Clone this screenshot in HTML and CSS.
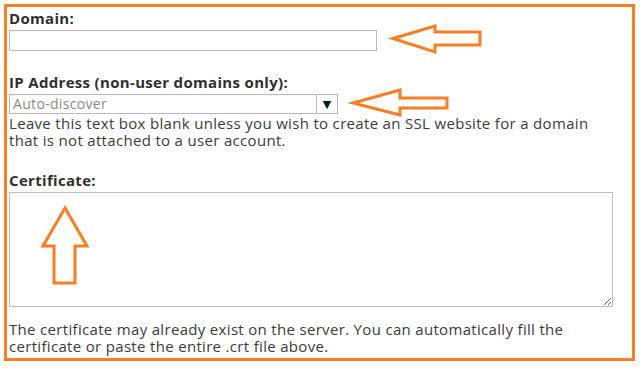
FILE: index.html
```html
<!doctype html>
<html lang="en">
<head>
<title>Install SSL certificate</title>
<meta charset=UTF-8>
<meta name="viewport" content="width=device-width, initial-scale=1.0">
<link rel="stylesheet" href="styles.css">
</head>
<body>
<div class="frame">
<label class="lbl" for="domain">Domain:</label>
<input class="txt" id="domain" type="text">
<label class="lbl gap" for="ip">IP Address (non-user domains only):</label>
<div class="pick" id="ip">
<span class="pick-val">Auto-discover</span>
<span class="pick-btn">&#9660;</span>
</div>
<p class="hint">Leave this text box blank unless you wish to create an SSL website for a domain that is not attached to a user account.</p>
<label class="lbl gap" for="cert">Certificate:</label>
<textarea class="area" id="cert"></textarea>
<p class="hint after">The certificate may already exist on the server. You can automatically fill the certificate or paste the entire .crt file above.</p>
</div>
<!-- annotation arrows drawn over the form -->
<svg class="marks" width="643" height="370" viewBox="0 0 643 370">
<polygon points="393,38.5 435,26 435,32 480,32 480,45 435,45 435,52" />
<polygon points="353,103 400,90 400,98 447,98 447,108 400,108 400,115" />
<polygon points="65,208 87,246 75,246 75,283 54,283 54,246 43,246" />
</svg>
</body>
</html>
```
FILE: styles.css
```css
body {margin: 0; background: #fff; font-family: "Open Sans", "DejaVu Sans", sans-serif; font-size: 15px; letter-spacing: 0.32px; color: #3b3b3b;}
.frame {box-sizing: border-box; width: 631px; height: 357px; margin: 4px 0 0 4px; border: 3px solid #fb7d24; padding: 2px 18px 3px 2px; display: flex; flex-direction: column; align-items: flex-start;}
.lbl {display: block; font-weight: bold; line-height: 18px; color: #2f2f2f; margin-bottom: 3px;}
.lbl.gap {margin-top: 22px;}
.txt {box-sizing: border-box; width: 368px; height: 21px; margin: 0; border: 1px solid #b9b9b9; padding: 0 4px; font: inherit;}
.pick {box-sizing: border-box; width: 329px; height: 20px; border: 1px solid #b9b9b9; display: flex; align-items: stretch; font-size: 14px; color: #8a8a8a;}
.pick-val {flex: 1; padding-left: 3px; line-height: 18px;}
.pick-btn {width: 20px; border-left: 1px solid #b9b9b9; color: #111; font-size: 11px; letter-spacing: 0; line-height: 18px; text-align: center;}
.hint {margin: 1px 0 0 0; line-height: 17px; width: 604px;}
.hint.after {margin-top: 14px;}
.area {box-sizing: border-box; width: 604px; height: 115px; margin: 0; border: 1px solid #bdbdbd; padding: 2px; font: inherit; resize: both;}
.marks {position: absolute; top: 0; left: 0; pointer-events: none;}
.marks polygon {fill: none; stroke: #fb7d24; stroke-width: 3; stroke-linejoin: miter;}
```
